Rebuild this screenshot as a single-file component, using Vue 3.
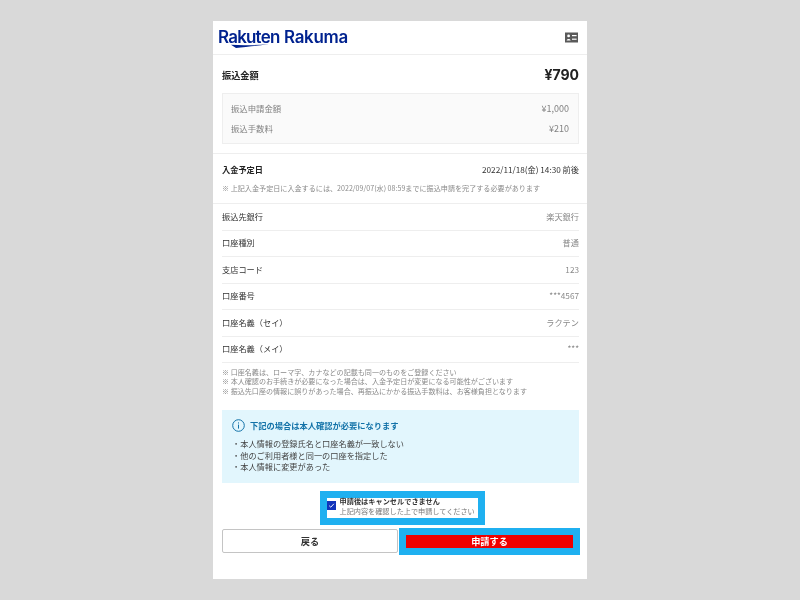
<script setup>
const rows = [
  ['振込先銀行', '楽天銀行'],
  ['口座種別', '普通'],
  ['支店コード', '123'],
  ['口座番号', '***4567'],
  ['口座名義（セイ）', 'ラクテン'],
  ['口座名義（メイ）', '***'],
]
const notes = [
  '※ 口座名義は、ローマ字、カナなどの記載も同一のものをご登録ください',
  '※ 本人確認のお手続きが必要になった場合は、入金予定日が変更になる可能性がございます',
  '※ 振込先口座の情報に誤りがあった場合、再振込にかかる振込手数料は、お客様負担となります',
]
const reasons = ['本人情報の登録氏名と口座名義が一致しない', '他のご利用者様と同一の口座を指定した', '本人情報に変更があった']
</script>

<template>
  <div class="page">
    <main class="card">
      <header class="header">
        <div class="logo">
          <span class="logo-text">Rakuten <span class="logo-second">Rakuma</span></span>
          <svg class="swoosh" width="38" height="4" viewBox="0 0 38 4"><path d="M0 0.8 C12 1.6 26 1.2 38 0 C26 2 14 2.6 5 4 Z" fill="#00228f" /></svg>
        </div>
        <svg class="id-icon" width="13" height="11" viewBox="0 0 13 11">
          <rect x="0" y="0.5" width="13" height="10" fill="#5a5a5a" />
          <circle cx="3.6" cy="3.9" r="1.4" fill="#fff" />
          <path d="M1.6 8.6 C1.6 6.3 5.6 6.3 5.6 8.6 Z" fill="#fff" />
          <rect x="7" y="3" width="4.6" height="1.2" fill="#fff" />
          <rect x="7" y="6.6" width="4.6" height="1.2" fill="#fff" />
        </svg>
      </header>

      <section class="amount">
        <div class="amount-head">
          <span class="amount-label">振込金額</span>
          <span class="amount-value">¥790</span>
        </div>
        <div class="breakdown">
          <div class="breakdown-row"><span>振込申請金額</span><span class="money">¥1,000</span></div>
          <div class="breakdown-row"><span>振込手数料</span><span class="money">¥210</span></div>
        </div>
      </section>

      <section class="schedule">
        <div class="schedule-head">
          <span class="schedule-label">入金予定日</span>
          <span class="schedule-value">2022/11/18(金) 14:30 前後</span>
        </div>
        <p class="schedule-note">※ 上記入金予定日に入金するには、2022/09/07(水) 08:59までに振込申請を完了する必要があります</p>
      </section>

      <section class="rows">
        <div v-for="r in rows" :key="r[0]" class="row">
          <span class="row-label">{{ r[0] }}</span>
          <span class="row-value">{{ r[1] }}</span>
        </div>
      </section>

      <section class="notes">
        <p v-for="n in notes" :key="n">{{ n }}</p>
      </section>

      <section class="info">
        <div class="info-title">
          <svg width="13" height="13" viewBox="0 0 13 13">
            <circle cx="6.5" cy="6.5" r="5.8" fill="none" stroke="#1272a8" stroke-width="1" />
            <rect x="6" y="5.6" width="1" height="4" fill="#1272a8" />
            <rect x="6" y="3.4" width="1" height="1.1" fill="#1272a8" />
          </svg>
          <span>下記の場合は本人確認が必要になります</span>
        </div>
        <ul class="info-list">
          <li v-for="r in reasons" :key="r">・{{ r }}</li>
        </ul>
      </section>

      <div class="confirm-wrap">
        <label class="confirm">
          <span class="check">
            <svg width="9" height="9" viewBox="0 0 9 9"><path d="M2.2 4.7 L3.8 6.2 L6.9 2.8" fill="none" stroke="#fff" stroke-width="0.9" /></svg>
          </span>
          <span class="confirm-text">
            <strong>申請後はキャンセルできません</strong>
            <span>上記内容を確認した上で申請してください</span>
          </span>
        </label>
      </div>

      <div class="actions">
        <button class="back">戻る</button>
        <div class="submit-wrap"><button class="submit">申請する</button></div>
      </div>
    </main>
  </div>
</template>

<style scoped>
.page {
  min-height: 600px;
  box-sizing: border-box;
  padding-top: 21px;
  background: #d9d9d9;
  display: flex;
  justify-content: center;
  font-family: "Noto Sans CJK JP", "Noto Sans", sans-serif;
  color: #333;
}
.card {
  width: 374px;
  height: 558px;
  background: #fff;
  display: flex;
  flex-direction: column;
  filter: blur(0.3px);
}
.header {
  height: 33px;
  flex: none;
  border-bottom: 1px solid #eee;
  padding: 0 9px 0 5px;
  display: flex;
  align-items: center;
  justify-content: space-between;
}
.logo { position: relative; height: 20px; margin-top: -2px; }
.logo-text {
  font-family: Inter, sans-serif;
  font-weight: 600;
  font-size: 16.9px;
  line-height: 20px;
  letter-spacing: -0.75px;
  color: #00228f;
  white-space: nowrap;
  display: block;
}
.logo-second { letter-spacing: -0.25px; margin-left: 1px; }
.swoosh { position: absolute; left: 13px; top: 17px; }
.amount {
  height: 99px;
  flex: none;
  box-sizing: border-box;
  padding: 0 8px 0 9px;
  border-bottom: 1px solid #eee;
}
.amount-head {
  height: 38px;
  display: flex;
  justify-content: space-between;
  align-items: center;
}
.amount-label { font-size: 9.2px; font-weight: 700; color: #222; padding-top: 1px; }
.amount-value { font-family: Inter, "Noto Sans", sans-serif; font-size: 14px; font-weight: 700; color: #222; }
.breakdown {
  height: 51px;
  box-sizing: border-box;
  background: #fafafa;
  border: 1px solid #eee;
  padding: 0 9px 2px 8px;
  display: flex;
  flex-direction: column;
  justify-content: center;
  gap: 4px;
}
.breakdown-row {
  height: 16px;
  display: flex;
  justify-content: space-between;
  align-items: center;
  font-size: 8.4px;
  color: #828282;
}
.money { font-size: 9px; padding-top: 1px; }
.schedule {
  height: 50px;
  flex: none;
  box-sizing: border-box;
  padding: 0 8px 0 9px;
  border-bottom: 1px solid #eee;
}
.schedule-head {
  height: 29px;
  display: flex;
  justify-content: space-between;
  align-items: center;
}
.schedule-label { font-size: 8.2px; font-weight: 700; color: #222; }
.schedule-value { font-size: 8.2px; color: #333; }
.schedule-note { margin: 0; font-size: 7.1px; line-height: 10px; color: #8a8a8a; white-space: nowrap; }
.rows { flex: none; padding: 0 8px 0 9px; }
.row {
  height: 26.5px;
  box-sizing: border-box;
  padding-bottom: 1.6px;
  border-bottom: 1px solid #eee;
  display: flex;
  justify-content: space-between;
  align-items: center;
  font-size: 8.2px;
}
.row-label { color: #333; }
.row-value { color: #8a8a8a; }
.notes {
  flex: none;
  height: 47px;
  box-sizing: border-box;
  padding: 4.5px 9px 0;
}
.notes p {
  margin: 0;
  font-size: 7.07px;
  line-height: 9.6px;
  color: #8a8a8a;
  white-space: nowrap;
}
.info {
  flex: none;
  height: 73px;
  box-sizing: border-box;
  margin: 0 8px 0 9px;
  padding: 8px 10px 0;
  background: #e2f6fd;
}
.info-title {
  display: flex;
  align-items: center;
  gap: 5px;
  font-size: 8.25px;
  font-weight: 700;
  color: #1272a8;
  height: 14px;
}
.info-list {
  list-style: none;
  margin: 6px 0 0;
  padding: 0;
  font-size: 8.2px;
  line-height: 11.6px;
  color: #444;
}
.confirm-wrap { flex: none; display: flex; justify-content: center; margin-top: 8px; padding-left: 4px; }
.confirm {
  width: 151px;
  height: 20px;
  border: 7px solid #1fb0f0;
  background: #fff;
  display: flex;
  align-items: center;
  gap: 4px;
}
.check {
  width: 9px;
  height: 9px;
  margin-top: -5px;
  background: #1133bb;
  display: flex;
}
.confirm-text { display: flex; flex-direction: column; font-size: 7.15px; line-height: 10px; color: #777; white-space: nowrap; margin-top: -5px; }
.confirm-text strong { color: #333; font-weight: 700; font-size: 7.2px; }
.actions {
  flex: none;
  display: flex;
  padding-left: 9px;
  margin-top: 3px;
  gap: 1px;
  align-items: flex-start;
}
.back {
  width: 176px;
  height: 24px;
  margin-top: 1px;
  box-sizing: border-box;
  padding: 0;
  background: #fff;
  border: 1px solid #c4c4c4;
  border-radius: 2px;
  font: 700 9.2px "Noto Sans CJK JP", sans-serif;
  color: #333;
}
.submit-wrap { padding: 7px; background: #1fb0f0; display: flex; }
.submit {
  width: 167px;
  height: 13px;
  padding: 0;
  border: 0;
  background: #ef0000;
  color: #fff;
  font: 700 9.2px/13px "Noto Sans CJK JP", sans-serif;
}
</style>

<style>
body { margin: 0; background: #d9d9d9; }
</style>
